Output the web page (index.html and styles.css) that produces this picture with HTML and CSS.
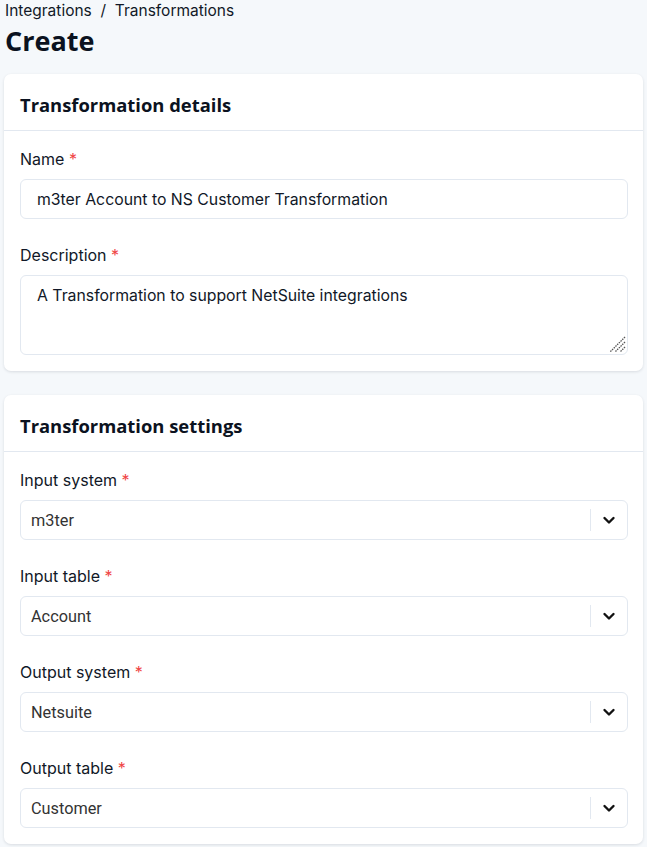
FILE: index.html
```html
<!DOCTYPE html>
<html lang="en">
<head>
<meta charset="utf-8">
<title>Create Transformation</title>
<link rel="stylesheet" href="styles.css">
</head>
<body>
<div class="page">
  <nav class="breadcrumb">Integrations&nbsp; / &nbsp;Transformations</nav>
  <h1 class="title">Create</h1>

  <section class="card">
    <header class="card-header"><h2>Transformation details</h2></header>
    <div class="card-body">
      <div class="field">
        <label class="label">Name <span class="req">*</span></label>
        <div class="input">m3ter Account to NS Customer Transformation</div>
      </div>
      <div class="field">
        <label class="label">Description <span class="req">*</span></label>
        <div class="textarea">A Transformation to support NetSuite integrations
          <svg class="grip" width="18" height="18" viewBox="0 0 18 18"><path d="M17 2 L2 17 M17 7 L7 17 M17 12 L12 17" stroke="#555" stroke-width="1.3" stroke-dasharray="1.5 0.9" fill="none"/></svg>
        </div>
      </div>
    </div>
  </section>

  <section class="card">
    <header class="card-header"><h2>Transformation settings</h2></header>
    <div class="card-body">
      <div class="field">
        <label class="label">Input system <span class="req">*</span></label>
        <div class="select"><span class="value">m3ter</span><span class="sep"></span><svg class="chev" width="14" height="14" viewBox="0 0 14 14"><path d="M2.5 5 L7 9.5 L11.5 5" stroke="#111" stroke-width="2.4" fill="none" stroke-linecap="round" stroke-linejoin="round"/></svg></div>
      </div>
      <div class="field">
        <label class="label">Input table <span class="req">*</span></label>
        <div class="select"><span class="value">Account</span><span class="sep"></span><svg class="chev" width="14" height="14" viewBox="0 0 14 14"><path d="M2.5 5 L7 9.5 L11.5 5" stroke="#111" stroke-width="2.4" fill="none" stroke-linecap="round" stroke-linejoin="round"/></svg></div>
      </div>
      <div class="field">
        <label class="label">Output system <span class="req">*</span></label>
        <div class="select"><span class="value">Netsuite</span><span class="sep"></span><svg class="chev" width="14" height="14" viewBox="0 0 14 14"><path d="M2.5 5 L7 9.5 L11.5 5" stroke="#111" stroke-width="2.4" fill="none" stroke-linecap="round" stroke-linejoin="round"/></svg></div>
      </div>
      <div class="field">
        <label class="label">Output table <span class="req">*</span></label>
        <div class="select"><span class="value">Customer</span><span class="sep"></span><svg class="chev" width="14" height="14" viewBox="0 0 14 14"><path d="M2.5 5 L7 9.5 L11.5 5" stroke="#111" stroke-width="2.4" fill="none" stroke-linecap="round" stroke-linejoin="round"/></svg></div>
      </div>
    </div>
  </section>
</div>
</body>
</html>
```

FILE: styles.css
```css
html, body {
  margin: 0;
  padding: 0;
  background: #f5f8fb;
  font-family: Inter, "Noto Sans", sans-serif;
  color: #0f172a;
}
.page {
  padding: 0 4px 4px 4px;
}
.breadcrumb {
  padding-left: 1px;
  font-size: 15.5px;
  line-height: 22px;
  color: #111827;
}
.title {
  margin: 0;
  padding-left: 1px;
  font-family: "Open Sans", sans-serif;
  font-weight: 700;
  font-size: 27px;
  line-height: 38px;
  color: #0b1220;
}
.card {
  background: #fff;
  border-radius: 7px;
  box-shadow: 0 1px 3px rgba(15, 23, 42, 0.12);
  margin-top: 14px;
  margin-bottom: 24px;
}
.card + .card { margin-top: 0; }
.card-header {
  height: 57px;
  box-sizing: border-box;
  display: flex;
  align-items: center;
  padding: 4px 16px 0 16px;
  border-bottom: 1px solid #e2e8f0;
}
.card-header h2 {
  margin: 0;
  font-family: "Open Sans", sans-serif;
  font-weight: 700;
  font-size: 18.4px;
  color: #0b1220;
}
.card-body {
  padding: 16px 15px 16px 16px;
  display: flex;
  flex-direction: column;
  gap: 24px;
}
.field {
  display: flex;
  flex-direction: column;
  gap: 8px;
}
.label {
  font-size: 16px;
  line-height: 24px;
  color: #111827;
}
.req { color: #ef4444; }
.input, .textarea, .select {
  border: 1px solid #e2e8f0;
  border-radius: 6px;
  background: #fff;
  font-size: 15.8px;
  color: #111827;
}
.input {
  height: 38px;
  display: flex;
  align-items: center;
  padding: 0 16px;
}
.textarea {
  position: relative;
  padding: 8px 16px;
  box-sizing: border-box;
  height: 80px;
  line-height: 24px;
}
.grip {
  position: absolute;
  right: 1px;
  bottom: 1px;
}
.select {
  height: 38px;
  display: flex;
  align-items: center;
  padding-left: 10px;
  font-family: Roboto, sans-serif;
  font-size: 16.3px;
  color: #333;
}
.value { flex: 1; }
.sep {
  width: 1px;
  height: 22px;
  background: #e2e8f0;
}
.chev {
  margin: 0 11px 0 11px;
}
```
